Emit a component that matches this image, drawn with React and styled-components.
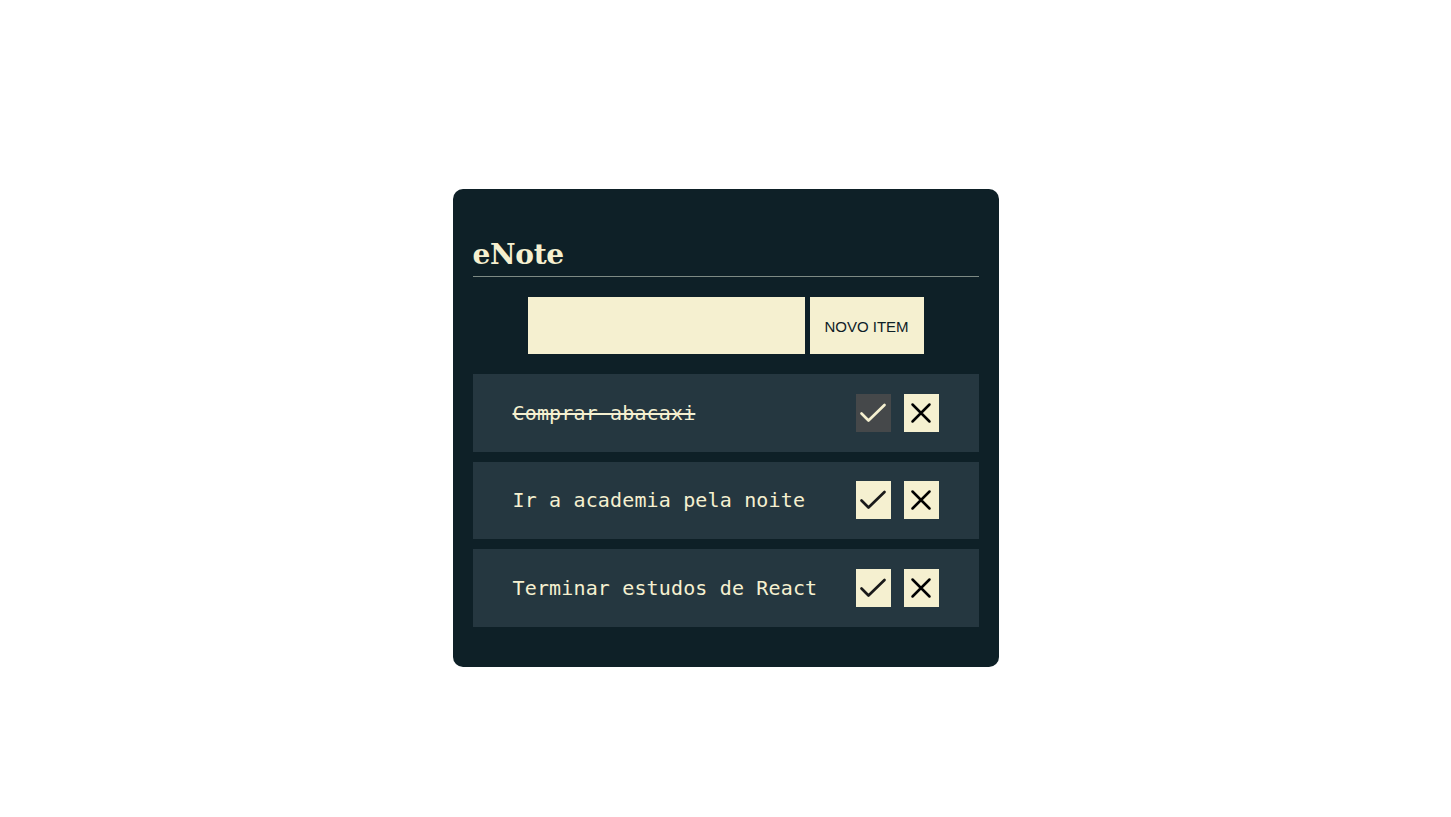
import React, { useState } from 'react';
import styled, { createGlobalStyle } from 'styled-components';

const GlobalStyle = createGlobalStyle`
  body {
    margin: 0;
    background: #ffffff;
    font-family: "Liberation Sans", Arial, sans-serif;
  }
`;

const Page = styled.div`
  min-height: 817px;
  display: flex;
  justify-content: center;
  padding-top: 189px;
  box-sizing: border-box;
`;

const Card = styled.main`
  width: 546px;
  height: 478px;
  box-sizing: border-box;
  background-color: #0e2027;
  border-radius: 10px;
  padding: 49px 20px 40px;
  display: flex;
  flex-direction: column;
`;

const Header = styled.header`
  border-bottom: 1px solid #7d8a84;
  padding-bottom: 5px;
`;

const Title = styled.h1`
  margin: 0;
  font-family: "DejaVu Serif", "Liberation Serif", serif;
  font-weight: 700;
  font-size: 28px;
  line-height: 33px;
  letter-spacing: -0.3px;
  color: #f5f0d0;
`;

const Form = styled.form`
  display: flex;
  justify-content: center;
  gap: 5px;
  margin: 20px 0;
`;

const Input = styled.input`
  width: 277px;
  height: 57px;
  box-sizing: border-box;
  border: none;
  outline: none;
  background-color: #f5f0d0;
  padding: 0 12px;
  font-size: 16px;
`;

const AddButton = styled.button`
  width: 114px;
  height: 57px;
  border: none;
  background-color: #f5f0d0;
  color: #0e2027;
  font-family: "Liberation Sans", Arial, sans-serif;
  font-size: 15px;
  padding: 2px 0 0;
  cursor: pointer;
`;

const List = styled.ul`
  list-style: none;
  margin: 0;
  padding: 0;
  display: flex;
  flex-direction: column;
  gap: 10px;
`;

const Row = styled.li`
  height: 77.6px;
  background-color: #253740;
  display: flex;
  align-items: center;
  padding: 0 40px;
`;

const Text = styled.span`
  flex: 1;
  font-family: "DejaVu Sans Mono", "Liberation Mono", monospace;
  font-size: 20px;
  letter-spacing: 0.15px;
  color: #f5f0d0;
  text-decoration: ${p => (p.$done ? 'line-through' : 'none')};
  text-decoration-thickness: 2px;
`;

const Actions = styled.div`
  display: flex;
  gap: 13px;
`;

const IconButton = styled.button`
  width: 35px;
  height: 38px;
  border: none;
  padding: 0;
  display: flex;
  align-items: center;
  justify-content: center;
  background-color: ${p => (p.$active ? '#45484a' : '#f5f0d0')};
  color: ${p => (p.$active ? '#f5f0d0' : '#1a1a1a')};
  cursor: pointer;
`;

const CheckIcon = () => (
  <svg width="30" height="30" viewBox="0 0 30 30" fill="none" stroke="currentColor" strokeWidth="2.7" strokeLinecap="round" strokeLinejoin="round">
    <path d="M3.5 15.5 L10.5 22.5 L26.5 7" />
  </svg>
);

const CloseIcon = () => (
  <svg width="26" height="26" viewBox="0 0 26 26" fill="none" stroke="#000" strokeWidth="2.5" strokeLinecap="round">
    <path d="M4.5 4.5 L21.5 21.5 M21.5 4.5 L4.5 21.5" />
  </svg>
);

const initialItems = [
  { id: 1, text: 'Comprar abacaxi', done: true },
  { id: 2, text: 'Ir a academia pela noite', done: false },
  { id: 3, text: 'Terminar estudos de React', done: false },
];

const App = () => {
  const [items, setItems] = useState(initialItems);
  const [value, setValue] = useState('');

  const toggle = id =>
    setItems(list => list.map(item => (item.id === id ? { ...item, done: !item.done } : item)));

  const remove = id => setItems(list => list.filter(item => item.id !== id));

  const add = e => {
    e.preventDefault();
    if (!value.trim()) return;
    setItems(list => [...list, { id: Date.now(), text: value, done: false }]);
    setValue('');
  };

  return (
    <>
      <GlobalStyle />
      <Page>
        <Card>
          <Header>
            <Title>eNote</Title>
          </Header>

          <Form onSubmit={add}>
            <Input value={value} onChange={e => setValue(e.target.value)} />
            <AddButton type="submit">NOVO ITEM</AddButton>
          </Form>

          <List>
            {items.map(item => (
              <Row key={item.id}>
                <Text $done={item.done}>{item.text}</Text>
                <Actions>
                  <IconButton $active={item.done} onClick={() => toggle(item.id)}>
                    <CheckIcon />
                  </IconButton>
                  <IconButton onClick={() => remove(item.id)}>
                    <CloseIcon />
                  </IconButton>
                </Actions>
              </Row>
            ))}
          </List>
        </Card>
      </Page>
    </>
  );
};

export default App;
